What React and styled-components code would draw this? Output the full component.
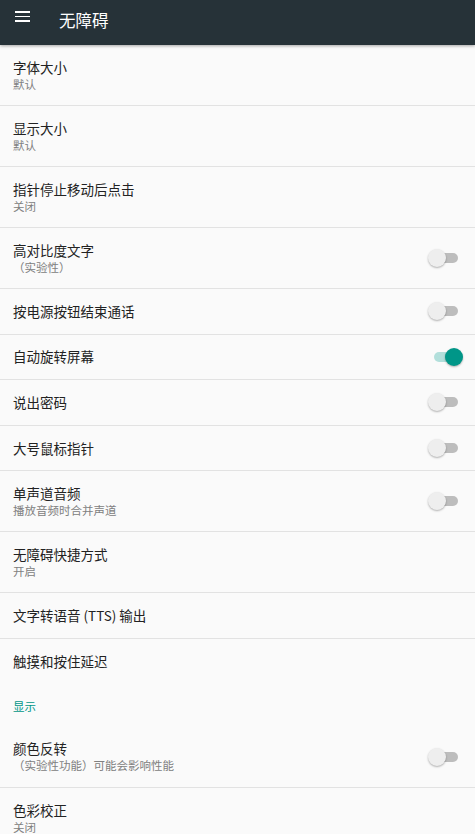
import styled, { createGlobalStyle } from "styled-components";

const GlobalStyle = createGlobalStyle`
  html, body {
    margin: 0;
    padding: 0;
    background: #fafafa;
  }
  body {
    font-family: "Noto Sans CJK SC", "Noto Sans", sans-serif;
    -webkit-font-smoothing: antialiased;
  }
`;

// Toolbar
const Toolbar = styled.header`
  position: relative;
  z-index: 2;
  height: 45px;
  background: #263238;
  display: flex;
  align-items: flex-start;
  box-shadow: 0 1px 3px rgba(0, 0, 0, 0.35);
`;

const MenuButton = styled.div`
  width: 15px;
  margin: 11px 0 0 15px;
  display: flex;
  flex-direction: column;
  gap: 3px;

  span {
    display: block;
    height: 1.6px;
    background: #ffffff;
  }
`;

const Title = styled.h1`
  margin: 9px 0 0 29px;
  font-size: 16.5px;
  line-height: 22px;
  font-weight: 400;
  color: #ffffff;
`;

// List
const List = styled.div`
  display: flex;
  flex-direction: column;
`;

const Row = styled.div`
  display: flex;
  align-items: center;
  justify-content: space-between;
  box-sizing: border-box;
  height: ${(p) => (p.$tall ? "61px" : "45.6px")};
  padding: 0 11px 0 13px;
  border-bottom: ${(p) => (p.$last ? "none" : "1px solid #e2e2e2")};
`;

const Texts = styled.div`
  display: flex;
  flex-direction: column;
`;

const ItemTitle = styled.div`
  font-size: 13.5px;
  line-height: 17px;
  color: #222222;
`;

const ItemSub = styled.div`
  font-size: 11.5px;
  line-height: 15px;
  color: #808080;
  margin-top: 1px;
`;

const SectionLabel = styled.div`
  height: 42px;
  display: flex;
  align-items: center;
  padding-left: 13px;
  font-size: 11.5px;
  color: #009688;
`;

// Switch
const Switch = styled.div`
  position: relative;
  width: 36px;
  height: 20px;
  flex-shrink: 0;
`;

const Track = styled.div`
  position: absolute;
  left: 6px;
  right: 6px;
  top: 5px;
  height: 10px;
  border-radius: 5px;
  background: ${(p) => (p.$on ? "#b2dfdb" : "#bdbdbd")};
`;

const Thumb = styled.div`
  position: absolute;
  top: 1px;
  left: ${(p) => (p.$on ? "17px" : "0px")};
  width: 18px;
  height: 18px;
  border-radius: 50%;
  background: ${(p) => (p.$on ? "#009688" : "#eeeeee")};
  box-shadow: 0 1px 2px rgba(0, 0, 0, 0.3);
`;

function Toggle({ on }) {
  return (
    <Switch>
      <Track $on={on} />
      <Thumb $on={on} />
    </Switch>
  );
}

const topItems = [
  { title: "字体大小", sub: "默认" },
  { title: "显示大小", sub: "默认" },
  { title: "指针停止移动后点击", sub: "关闭" },
  { title: "高对比度文字", sub: "（实验性）", toggle: false },
  { title: "按电源按钮结束通话", toggle: false },
  { title: "自动旋转屏幕", toggle: true },
  { title: "说出密码", toggle: false },
  { title: "大号鼠标指针", toggle: false },
  { title: "单声道音频", sub: "播放音频时合并声道", toggle: false },
  { title: "无障碍快捷方式", sub: "开启" },
  { title: "文字转语音 (TTS) 输出" },
  { title: "触摸和按住延迟", last: true },
];

const displayItems = [
  { title: "颜色反转", sub: "（实验性功能）可能会影响性能", toggle: false },
  { title: "色彩校正", sub: "关闭", last: true },
];

function Item({ title, sub, toggle, last }) {
  return (
    <Row $tall={!!sub} $last={last}>
      <Texts>
        <ItemTitle>{title}</ItemTitle>
        {sub && <ItemSub>{sub}</ItemSub>}
      </Texts>
      {toggle !== undefined && <Toggle on={toggle} />}
    </Row>
  );
}

export default function App() {
  return (
    <>
      <GlobalStyle />
      <Toolbar>
        <MenuButton>
          <span />
          <span />
          <span />
        </MenuButton>
        <Title>无障碍</Title>
      </Toolbar>
      <List>
        {topItems.map((it) => (
          <Item key={it.title} {...it} />
        ))}
        <SectionLabel>显示</SectionLabel>
        {displayItems.map((it) => (
          <Item key={it.title} {...it} />
        ))}
      </List>
    </>
  );
}
